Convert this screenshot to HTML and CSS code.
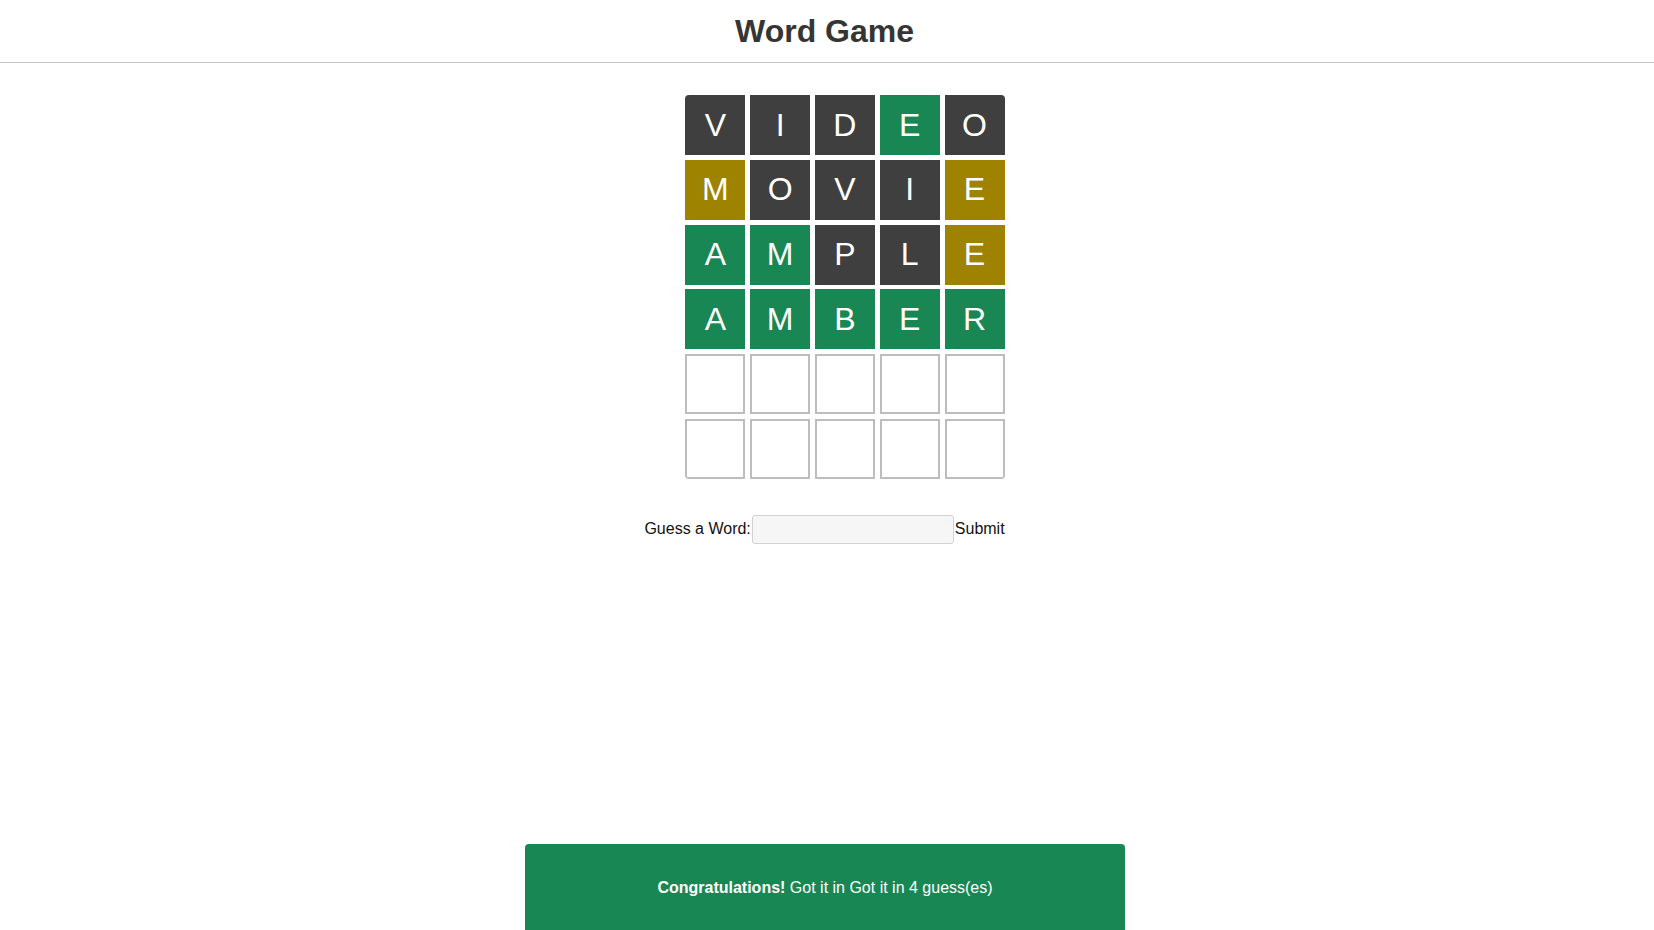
FILE: index.html
```html
<!DOCTYPE html>
<html lang="en">
<head>
<meta charset="utf-8">
<title>Word Game</title>
<link rel="stylesheet" href="styles.css">
</head>
<body>
<header class="header">
  <h1 class="title">Word Game</h1>
</header>
<main class="main">
  <div class="game">
    <div class="board">
      <div class="tile absent">V</div>
      <div class="tile absent">I</div>
      <div class="tile absent">D</div>
      <div class="tile correct">E</div>
      <div class="tile absent">O</div>

      <div class="tile present">M</div>
      <div class="tile absent">O</div>
      <div class="tile absent">V</div>
      <div class="tile absent">I</div>
      <div class="tile present">E</div>

      <div class="tile correct">A</div>
      <div class="tile correct">M</div>
      <div class="tile absent">P</div>
      <div class="tile absent">L</div>
      <div class="tile present">E</div>

      <div class="tile correct">A</div>
      <div class="tile correct">M</div>
      <div class="tile correct">B</div>
      <div class="tile correct">E</div>
      <div class="tile correct">R</div>

      <div class="tile empty"></div>
      <div class="tile empty"></div>
      <div class="tile empty"></div>
      <div class="tile empty"></div>
      <div class="tile empty"></div>

      <div class="tile empty"></div>
      <div class="tile empty"></div>
      <div class="tile empty"></div>
      <div class="tile empty"></div>
      <div class="tile empty"></div>
    </div>
    <form class="guess-form">
      <label class="guess-label" for="guess">Guess a Word:</label><input class="guess-input" id="guess" type="text"><button class="guess-submit" type="button">Submit</button>
    </form>
  </div>
</main>
<div class="toast">
  <strong>Congratulations!</strong> Got it in Got it in 4 guess(es)
</div>
</body>
</html>
```

FILE: styles.css
```css
html, body {
  margin: 0;
  padding: 0;
  background: #ffffff;
}

body {
  font-family: "Liberation Sans", Arial, sans-serif;
  font-size: 16px;
  color: #111111;
}

.header {
  padding: 13px 5px 12px 0;
  border-bottom: 1px solid #c4c4c4;
  text-align: center;
}

.title {
  margin: 0;
  font-size: 32px;
  font-weight: bold;
  color: #353535;
  line-height: 37px;
}

.main {
  display: flex;
  justify-content: center;
  padding: 32px 5px 0 0;
}

.game {
  width: 360px;
  display: flex;
  flex-direction: column;
  align-items: flex-end;
}

.board {
  display: grid;
  grid-template-columns: repeat(5, 60px);
  grid-auto-rows: 60px;
  gap: 4.8px;
  border-radius: 4px;
  overflow: hidden;
}

.tile {
  box-sizing: border-box;
  display: flex;
  align-items: center;
  justify-content: center;
  font-size: 32px;
  color: #ffffff;
}

.absent { background: #3f3f3f; }
.correct { background: #198754; }
.present { background: #9e8300; }
.empty {
  border: 2px solid #bdbdbd;
  background: #ffffff;
}

.guess-form {
  align-self: center;
  margin-top: 36px;
  display: flex;
  align-items: center;
  white-space: nowrap;
}

.guess-label {
  flex-shrink: 0;
  font-size: 16px;
  color: #111111;
}

.guess-input {
  flex-shrink: 0;
  box-sizing: border-box;
  width: 202px;
  height: 29px;
  margin: 0 1px;
  border: 1px solid #d2d2d2;
  border-radius: 3px;
  background: #f6f6f6;
  font-family: inherit;
  font-size: 14px;
  padding: 4px 6px;
}

.guess-submit {
  flex-shrink: 0;
  border: none;
  background: none;
  padding: 0;
  font-family: inherit;
  font-size: 16px;
  color: #111111;
  cursor: pointer;
}

.toast {
  position: fixed;
  left: calc(50% - 302px);
  bottom: 0;
  width: 600px;
  height: 86px;
  box-sizing: border-box;
  padding-top: 35px;
  background: #198754;
  color: #ffffff;
  border-radius: 4px 4px 0 0;
  text-align: center;
  font-size: 16px;
  line-height: 18px;
}
```
